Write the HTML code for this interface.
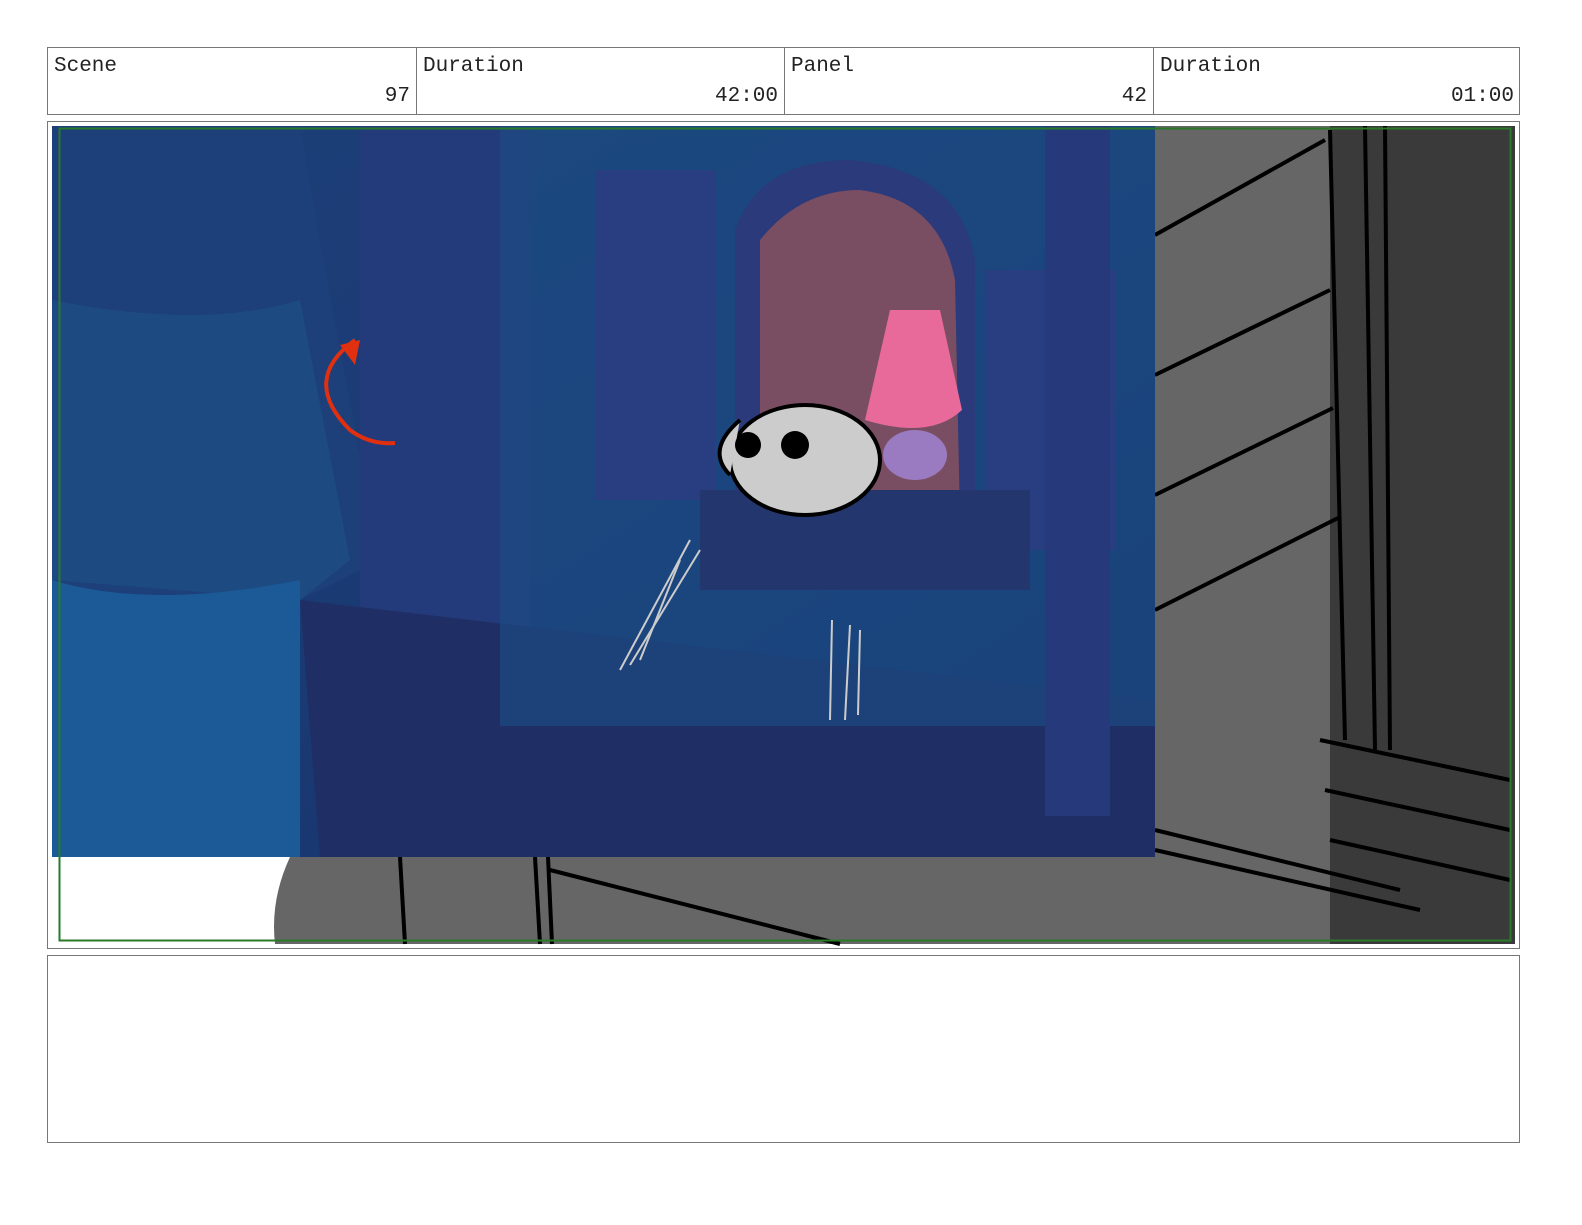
<!DOCTYPE html>
<html><head><style>
body{margin:0;background:#fff;width:1582px;height:1225px;position:relative;overflow:hidden;font-family:"Liberation Mono","Courier New",monospace;}
.hdr{position:absolute;left:47px;top:47px;width:1473px;height:68px;border:1px solid #777;box-sizing:border-box;}
.c{position:absolute;top:0;height:66px;border-left:1px solid #777;box-sizing:border-box;font-size:21px;color:#222;}
.c .l{position:absolute;left:6px;top:7px}
.c .v{position:absolute;right:6px;top:37px}
.frame{position:absolute;left:47px;top:121px;width:1473px;height:828px;border:1px solid #777;box-sizing:border-box;}
.notes{position:absolute;left:47px;top:955px;width:1473px;height:188px;border:1px solid #777;box-sizing:border-box;}
</style></head><body>
<div class="hdr">
<div class="c" style="left:0;width:368px;border-left:none"><span class="l">Scene</span><span class="v">97</span></div>
<div class="c" style="left:368px;width:368px"><span class="l">Duration</span><span class="v">42:00</span></div>
<div class="c" style="left:736px;width:369px"><span class="l">Panel</span><span class="v">42</span></div>
<div class="c" style="left:1105px;width:367px"><span class="l">Duration</span><span class="v">01:00</span></div>
</div>
<div class="frame"></div>
<svg style="position:absolute;left:0;top:0" width="1582" height="1225">
<path d="M290 857 L1515 857 L1515 944 L275 944 Q270 900 290 857Z" fill="#666"/>
<rect x="1155" y="126" width="360" height="818" fill="#666"/>
<rect x="1330" y="126" width="185" height="818" fill="#3a3a3a"/>
<g stroke="#000" stroke-width="4" fill="none">
<path d="M1155 235 L1325 140"/><path d="M1155 375 L1330 290"/><path d="M1155 495 L1333 408"/><path d="M1155 610 L1338 518"/>
<path d="M1330 130 L1345 740"/><path d="M1365 126 L1375 750"/><path d="M1385 126 L1390 750"/>
<path d="M1320 740 L1510 780"/><path d="M1325 790 L1510 830"/><path d="M1330 840 L1510 880"/>
<path d="M1155 830 L1400 890"/><path d="M1155 850 L1420 910"/>
<path d="M400 857 L405 944"/><path d="M535 857 L540 944"/><path d="M548 857 L552 944"/>
<path d="M550 870 L840 944"/>
</g>
<defs><linearGradient id="bg" x1="0" y1="0" x2="1" y2="1"><stop offset="0" stop-color="#1d3f78"/><stop offset="0.5" stop-color="#1a3a74"/><stop offset="1" stop-color="#16306a"/></linearGradient></defs>
<rect x="52" y="126" width="1103" height="731" fill="url(#bg)"/>
<path d="M52 126 L300 126 Q330 300 380 560 L300 600 L300 857 L52 857Z" fill="#1d3f7a"/>
<path d="M52 300 Q200 330 300 300 L350 560 L300 600 L52 580Z" fill="#1e4a82"/>
<path d="M52 580 Q150 610 300 580 L300 857 L52 857Z" fill="#1b5a96"/>
<rect x="360" y="126" width="170" height="560" fill="#233b7a"/>
<path d="M300 600 L1155 700 L1155 857 L320 857Z" fill="#1f2f66"/>
<rect x="500" y="126" width="655" height="600" fill="#1d4f86" opacity="0.6"/>
<rect x="595" y="170" width="120" height="330" fill="#283e80"/>
<rect x="985" y="270" width="130" height="280" fill="#283e80"/>
<path d="M735 560 L735 230 Q760 160 850 160 Q960 170 975 260 L975 560Z" fill="#2a3a7a"/>
<path d="M760 520 L760 240 Q800 190 860 190 Q940 200 955 280 L960 520Z" fill="#7a4e62"/>
<path d="M890 310 L940 310 L962 410 Q930 440 865 420Z" fill="#e86a9a"/>
<ellipse cx="915" cy="455" rx="32" ry="25" fill="#9a7ac0"/>
<rect x="1045" y="126" width="65" height="690" fill="#26397a"/>
<rect x="700" y="490" width="330" height="100" fill="#23366e"/>
<ellipse cx="805" cy="460" rx="75" ry="55" fill="#ccc" stroke="#000" stroke-width="4"/>
<path d="M740 420 Q705 450 730 475" fill="#ccc" stroke="#000" stroke-width="4"/>
<circle cx="748" cy="445" r="13" fill="#000"/><circle cx="795" cy="445" r="14" fill="#000"/>
<path d="M355 340 Q300 380 350 430 Q370 445 395 443" stroke="#e03010" stroke-width="4" fill="none"/>
<path d="M340 345 L360 340 L355 365Z" fill="#e03010"/>
<g stroke="#ccc" stroke-width="2"><path d="M620 670 L690 540"/><path d="M630 665 L700 550"/><path d="M640 660 L680 560"/><path d="M830 720 L832 620"/><path d="M845 720 L850 625"/><path d="M858 715 L860 630"/></g>
<rect x="59.5" y="128.5" width="1451" height="812" fill="none" stroke="#2a7a2a" stroke-width="2"/>
</svg>
<div class="notes"></div>
</body></html>
